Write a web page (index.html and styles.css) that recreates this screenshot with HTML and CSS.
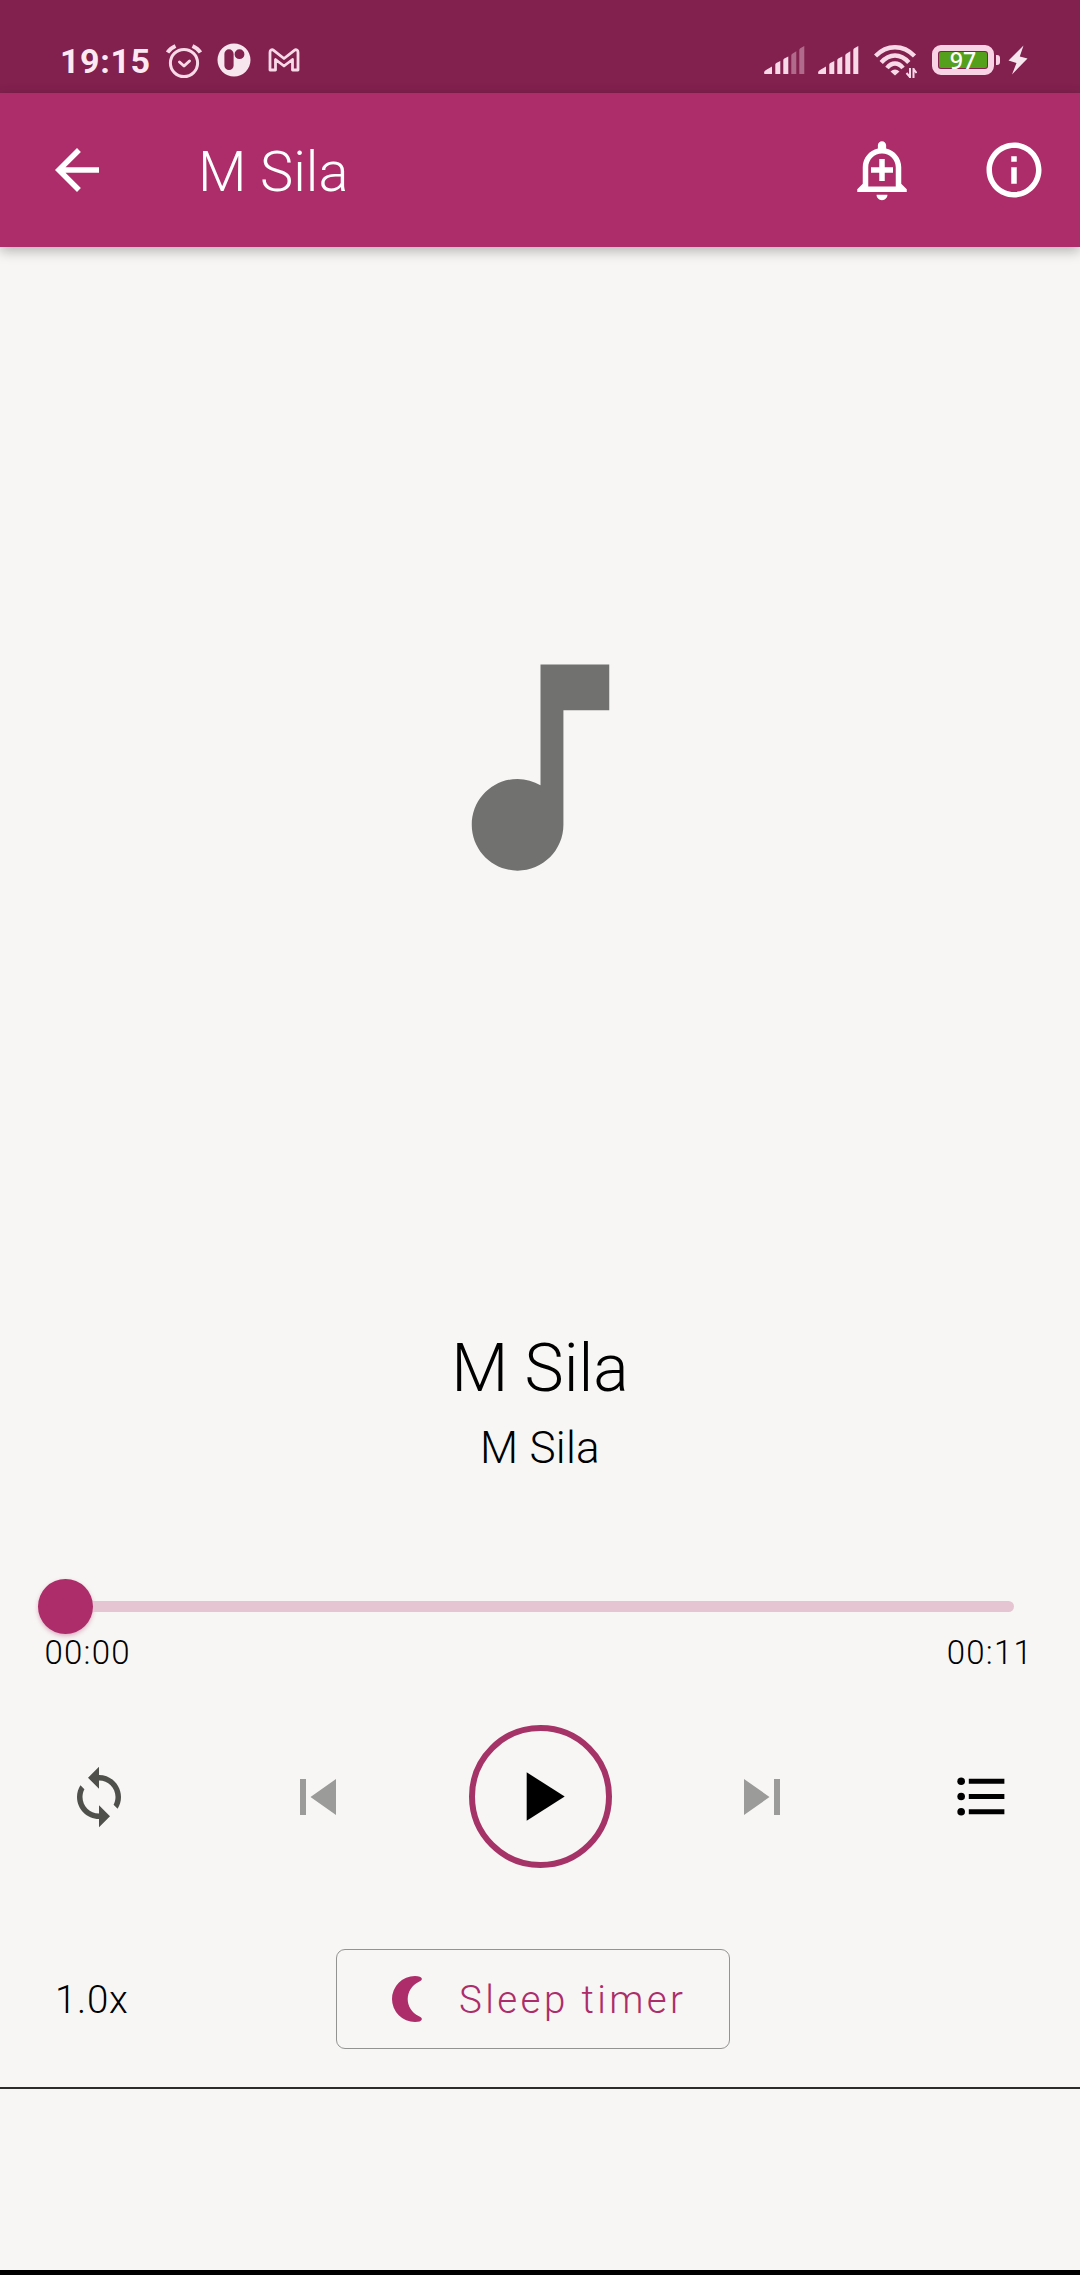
FILE: index.html
```
<!DOCTYPE html>
<html lang="en">
<head>
<meta charset="utf-8">
<title>M Sila</title>
<link rel="stylesheet" href="styles.css">
</head>
<body>
<div class="screen">
  <header class="status">
    <span class="clock">19:15</span>
    <div class="notifications">
      <svg class="ic-alarm" width="36" height="36" viewBox="0 0 36 36" fill="none" stroke="currentColor" stroke-width="3" stroke-linecap="round" stroke-linejoin="round">
        <circle cx="18" cy="20" r="13.6"/><path d="M13.500 19l4.500 4 5.500-5"/><path stroke-width="4" stroke-linecap="butt" d="M1.500 9.500Q4 5.500 9.500 3M26.500 3Q32 5.500 34.500 9.500"/>
      </svg>
      <svg class="ic-app" width="34" height="34" viewBox="0 0 34 34">
        <path fill="currentColor" fill-rule="evenodd" d="M17 .5a16.500 16.500 0 1 1 0 33a16.500 16.500 0 0 1 0-33zM12 6.300A4.600 4.600 0 0 0 7.400 11V22.500A4.600 4.600 0 0 0 16.600 22.500V11A4.600 4.600 0 0 0 12 6.300zM22.500 6.300a4.900 4.900 0 1 0 0 9.800a4.900 4.900 0 1 0 0-9.800z"/>
      </svg>
      <svg class="ic-mail" width="32" height="24" viewBox="0 0 32 24" fill="none" stroke="currentColor" stroke-width="2.800" stroke-linejoin="round">
        <path d="M2 22V4.500Q2 1.500 5 1.800L16 10.500L27 1.800Q30 1.500 30 4.500V22H24.500V11.500L16 18L7.500 11.500V22Z"/>
      </svg>
    </div>
    <div class="system">
      <svg class="ic-signal" width="41" height="30" viewBox="0 0 41 30" fill="currentColor">
        <path d="M0 28q0-2 2-3l6-3.500V29H1q-1 0-1-1zM11.300 19.500q0-1 1-1.500l4-2V29h-5zM19.300 15q0-1 1-1.500l4-2V29h-5z"/><path opacity=".4" d="M27.300 10.500q0-1 1-1.700l4-2.500V29h-5zM35.300 5q0-1 1-1.700L40.300 1V29h-5z"/>
      </svg>
      <svg class="ic-signal second" width="41" height="30" viewBox="0 0 41 30" fill="currentColor">
        <path d="M0 28q0-2 2-3l6-3.500V29H1q-1 0-1-1zM11.300 19.500q0-1 1-1.500l4-2V29h-5zM19.300 15q0-1 1-1.500l4-2V29h-5zM27.300 10.500q0-1 1-1.700l4-2.500V29h-5zM35.300 5q0-1 1-1.700L40.300 1V29h-5z"/>
      </svg>
      <svg class="ic-wifi" width="43" height="36" viewBox="0 0 43 36" fill="none" stroke="currentColor" stroke-width="4.400">
        <path d="M1.500 13Q10 4.200 21 4.200T40.500 13"/><path d="M7.200 19.500Q13.500 12.500 21 12.500T34.800 19.500"/><path d="M13 25Q16.500 20.500 21 20.500T29 25"/><path fill="currentColor" stroke="none" d="M16.500 28.500Q21 24.500 25.500 28.500L21 32.500z"/><path stroke-width="2" d="M36 25v10M32.500 30l3.500 4M39.500 35V25M39.500 26l3 4"/>
      </svg>
      <div class="battery"><div class="charge">97</div></div>
      <div class="battery-cap"></div>
      <svg class="ic-bolt" width="20" height="30" viewBox="0 0 20 30" fill="currentColor"><path d="M15.500.5L.5 15.500L8.500 18L4 29.500L19.500 13.500L11.800 11.500z"/></svg>
    </div>
  </header>

  <nav class="appbar">
    <svg class="back" width="66" height="66" viewBox="0 0 24 24" fill="currentColor"><path d="M20 11H7.830l5.590-5.590L12 4l-8 8 8 8 1.410-1.410L7.830 13H20v-2z"/></svg>
    <h1 class="bar-title">M Sila</h1>
    <svg class="add-alert" width="66" height="66" viewBox="0 0 24 24" fill="currentColor"><path d="M10.010 21.010c0 1.100.89 1.990 1.990 1.990s1.990-.89 1.990-1.990h-3.980zM12 6c2.760 0 5 2.240 5 5v7H7v-7c0-2.760 2.240-5 5-5zm0-4.500c-.83 0-1.500.67-1.500 1.500v1.170C7.360 4.850 5 7.650 5 11v6l-2 2v1h18v-1l-2-2v-6c0-3.350-2.360-6.150-5.500-6.830V3c0-.83-.67-1.500-1.500-1.500zM13 8h-2v3H8v2h3v3h2v-3h3v-2h-3V8z"/></svg>
    <svg class="info" width="66" height="66" viewBox="0 0 24 24" fill="currentColor"><path d="M11 7h2v2h-2zm0 4h2v6h-2zm1-9C6.480 2 2 6.480 2 12s4.480 10 10 10 10-4.480 10-10S17.520 2 12 2zm0 18c-4.410 0-8-3.590-8-8s3.590-8 8-8 8 3.590 8 8-3.590 8-8 8z"/></svg>
  </nav>

  <main class="player">
    <div class="artwork">
      <svg width="275" height="275" viewBox="0 0 24 24" fill="currentColor"><path d="M12 3v10.550c-.59-.34-1.270-.55-2-.55-2.210 0-4 1.790-4 4s1.790 4 4 4 4-1.790 4-4V7h4V3z"/></svg>
    </div>
    <h2 class="track">M Sila</h2>
    <p class="artist">M Sila</p>
    <div class="slider"><div class="thumb"></div><div class="rail"></div></div>
    <div class="times"><span>00:00</span><span>00:11</span></div>
    <div class="controls">
      <svg class="repeat" width="66" height="66" viewBox="0 0 24 24" fill="currentColor"><path d="M12 4V1L8 5l4 4V6c3.310 0 6 2.690 6 6 0 1.010-.25 1.970-.7 2.800l1.460 1.460C19.540 15.030 20 13.570 20 12c0-4.420-3.580-8-8-8zm0 14c-3.310 0-6-2.690-6-6 0-1.010.25-1.970.7-2.800L5.240 7.740C4.460 8.970 4 10.430 4 12c0 4.420 3.580 8 8 8v3l4-4-4-4v3z"/></svg>
      <div class="transport">
        <svg class="skip" width="72" height="72" viewBox="0 0 24 24" fill="currentColor"><path d="M6 6h2v12H6zm3.500 6l8.500 6V6z"/></svg>
        <div class="play"><svg width="83" height="83" viewBox="0 0 24 24" fill="currentColor"><path d="M8 5v14l11-7z"/></svg></div>
        <svg class="skip" width="72" height="72" viewBox="0 0 24 24" fill="currentColor"><path d="M6 18l8.500-6L6 6v12zM16 6v12h2V6h-2z"/></svg>
      </div>
      <svg class="queue" width="61" height="61" viewBox="0 0 24 24" fill="currentColor"><circle cx="4" cy="6" r="1.500"/><circle cx="4" cy="12" r="1.500"/><circle cx="4" cy="18" r="1.500"/><path d="M7 5h14v2H7zM7 11h14v2H7zM7 17h14v2H7z"/></svg>
    </div>
    <div class="options">
      <span class="speed">1.0x</span>
      <div class="sleep">
        <svg width="31" height="46" viewBox="0 0 31 46" fill="currentColor"><path d="M23 0Q29 0 29.800 2.500Q30.200 4.500 27 5.800C12 13 12 33 27 40.200Q30.200 41.500 29.800 43.500Q29 46 23 46A23 23 0 0 1 23 0z"/></svg>
        <span>Sleep timer</span>
      </div>
    </div>
  </main>
  <footer class="bottom"></footer>
</div>
</body>
</html>
```
FILE: styles.css
```
* { box-sizing: border-box; margin: 0; padding: 0; }

body { background: #f7f6f4; font-family: Roboto, sans-serif; font-weight: 300; color: #000; }

svg { display: block; flex: none; }

.screen { display: flex; flex-direction: column; width: 1080px; height: 2275px; overflow: hidden; }

/* System status bar */
.status { display: flex; height: 93px; padding: 0 52px 0 60px; background: #82204e; color: #f8d9e8; }
.clock { width: 103px; padding-top: 41px; font-size: 34px; font-weight: 700; line-height: 40px; letter-spacing: .6px; color: #fde9f2; }
.notifications { display: flex; flex: 1; align-items: flex-start; }
.ic-alarm { margin: 43px 0 0 3px; }
.ic-app { margin: 43px 0 0 15px; color: #f8e6ee; }
.ic-mail { margin: 48px 0 0 17px; }
.system { display: flex; align-items: flex-start; }
.ic-signal { margin-top: 45px; }
.second { margin-left: 13px; }
.ic-wifi { margin: 43px 0 0 15px; }
.battery { width: 62px; height: 30px; margin: 45px 0 0 15px; padding: 1px; border: 6px solid #f8d3e5; border-radius: 9px; }
.charge { height: 16px; background: #54a01c; border-radius: 2px; color: #fff; font-family: "Noto Sans", sans-serif; font-size: 23px; font-weight: 500; line-height: 16px; text-align: center; }
.battery-cap { width: 4px; height: 10px; margin: 55px 0 0 2px; border-radius: 0 3px 3px 0; background: #f8d3e5; }
.ic-bolt { margin: 45px 0 0 8px; color: #f8e6ee; }

/* Title bar */
.appbar { display: flex; align-items: center; flex: none; height: 154px; padding: 0 33px 0 44px; background: #ac2d69; color: #fff; box-shadow: 0 4px 12px rgba(0, 0, 0, .28); z-index: 1; }
.bar-title { flex: 1; padding: 4px 0 0 88px; font-size: 56px; font-weight: 300; line-height: 66px; }
.add-alert { margin-right: 66px; }

/* Player */
.player { display: flex; flex-direction: column; height: 1840px; }
.artwork { display: grid; place-items: center; height: 1040px; color: #71716f; }
.track { margin-top: 42px; font-size: 66px; font-weight: 300; line-height: 80px; text-align: center; }
.artist { margin-top: 9px; font-size: 44px; line-height: 60px; letter-spacing: .3px; text-align: center; }
.slider { display: flex; align-items: center; height: 55px; margin: 101px 66px 0 38px; }
.thumb { width: 55px; height: 55px; border-radius: 50%; background: #ac2d69; box-shadow: 0 2px 4px rgba(172, 45, 105, .35); }
.rail { flex: 1; height: 11px; border-radius: 0 6px 6px 0; background: #e4c5d1; }
.times { display: flex; justify-content: space-between; margin-top: -1px; padding: 0 47px 0 44.5px; font-size: 33px; line-height: 40px; letter-spacing: 1.2px; }
.controls { display: flex; align-items: center; justify-content: space-between; height: 143px; margin-top: 52px; padding: 0 68px 0 66px; }
.repeat { color: #4f4f4c; }
.transport { display: flex; align-items: center; justify-content: space-between; width: 516px; margin-right: 3px; }
.skip { color: #9b9b99; }
.play { display: grid; place-items: center; width: 143px; height: 143px; border: 6px solid #a63368; border-radius: 50%; }

/* Speed and sleep timer */
.options { display: flex; align-items: center; height: 100px; margin-top: 81px; padding-left: 55px; font-size: 38.5px; }
.speed { width: 281px; letter-spacing: .7px; }
.sleep { display: flex; align-items: center; width: 394px; height: 100px; padding-left: 55px; gap: 36px; border: 1px solid #939391; border-radius: 9px; color: #ac2d69; letter-spacing: 3.4px; white-space: nowrap; }

.bottom { flex: 1; border-top: 2px solid #2c2c2b; border-bottom: 5px solid #000; }
```
